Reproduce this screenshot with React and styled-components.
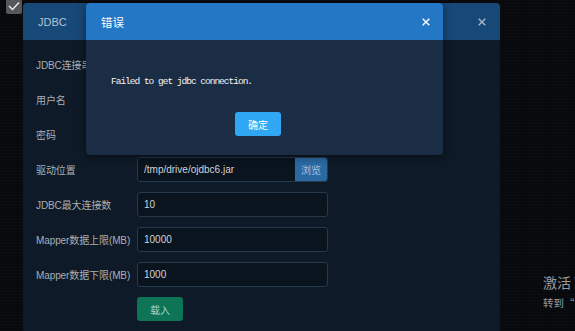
import React from "react";
import styled, { createGlobalStyle } from "styled-components";

const GlobalStyle = createGlobalStyle`
  html, body {
    margin: 0;
    padding: 0;
    width: 575px;
    height: 331px;
    overflow: hidden;
    background: #06080c;
    font-family: "Liberation Sans", "Noto Sans CJK SC", sans-serif;
  }
`;

const Desktop = styled.div`
  position: relative;
  width: 575px;
  height: 331px;
  overflow: hidden;
  background-color: #06080c;
  background-image:
    linear-gradient(rgba(255, 255, 255, 0.012) 1px, transparent 1px),
    linear-gradient(90deg, rgba(255, 255, 255, 0.012) 1px, transparent 1px);
  background-size: 3px 3px;
`;

const CheckBox = styled.div`
  position: absolute;
  left: 6px;
  top: -2px;
  width: 16px;
  height: 16px;
  background: #55575b;
  border-radius: 2px;
  display: flex;
  align-items: center;
  justify-content: center;
`;

const Dialog = styled.div`
  position: absolute;
  left: ${(p) => p.$left}px;
  top: 3px;
  width: ${(p) => p.$width}px;
  height: ${(p) => p.$height}px;
  background: ${(p) => p.$body};
  border-radius: 4px;
  overflow: hidden;
  display: flex;
  flex-direction: column;
  box-shadow: ${(p) => (p.$shadow ? "0 2px 8px rgba(0,0,0,0.45)" : "none")};
`;

const DialogHeader = styled.div`
  height: 37px;
  flex: none;
  background: ${(p) => p.$bg};
  display: flex;
  align-items: center;
  justify-content: space-between;
  padding: 0 ${(p) => p.$padRight}px 0 ${(p) => p.$padLeft}px;
  color: ${(p) => p.$color};
  font-size: ${(p) => p.$size}px;
`;

const Close = styled.svg`
  width: 8px;
  height: 8px;
  display: block;
`;

const FormBody = styled.div`
  padding: 12px 0 0 13px;
  display: flex;
  flex-direction: column;
  gap: 10px;
`;

const Row = styled.div`
  display: flex;
  align-items: center;
  height: 25px;
`;

const Label = styled.div`
  width: 101px;
  flex: none;
  font-size: 10px;
  color: #a9afb6;
  white-space: nowrap;
  letter-spacing: -0.1px;
`;

const InputWrap = styled.div`
  width: 191px;
  height: 25px;
  box-sizing: border-box;
  border: 1px solid #26384c;
  border-radius: 3px;
  background: #0a141e;
  display: flex;
  align-items: center;
  overflow: hidden;
`;

const InputText = styled.div`
  flex: 1;
  padding-left: 6px;
  font-size: 10px;
  color: #cfd3d7;
`;

const Browse = styled.div`
  width: 32px;
  height: 100%;
  background: #2a6aa4;
  color: #a8bfe0;
  font-size: 10px;
  display: flex;
  align-items: center;
  justify-content: center;
`;

const Button = styled.div`
  width: 46px;
  height: 24px;
  border-radius: 3px;
  background: ${(p) => p.$bg};
  color: ${(p) => p.$color};
  font-size: 10px;
  display: flex;
  align-items: center;
  justify-content: center;
`;

const ButtonRow = styled.div`
  padding-left: 101px;
`;

const ErrorBody = styled.div`
  flex: 1;
  display: flex;
  flex-direction: column;
  padding: 37px 0 0 25px;
`;

const Message = styled.div`
  font-family: "Liberation Mono", "DejaVu Sans Mono", monospace;
  font-size: 9.5px;
  letter-spacing: -1px;
  color: #f2f4f6;
  line-height: 10px;
`;

const ErrorFooter = styled.div`
  padding: 25px 0 0 124px;
`;

const Watermark = styled.div`
  position: absolute;
  left: 543px;
  top: 273px;
  color: #9b9b9b;
  white-space: nowrap;
  font-family: "Noto Sans CJK SC", sans-serif;
`;

const WmTitle = styled.div`
  font-size: 14px;
  line-height: 18px;
`;

const WmSub = styled.div`
  font-size: 10.5px;
  line-height: 14px;
  margin-top: 5px;
`;

const CloseIcon = ({ color }) => (
  <Close viewBox="0 0 8 8">
    <path d="M0.7 0.7 L7.3 7.3 M7.3 0.7 L0.7 7.3" stroke={color} strokeWidth="1.4" />
  </Close>
);

const rows = [
  { label: "JDBC连接串", value: "" },
  { label: "用户名", value: "" },
  { label: "密码", value: "" },
  { label: "驱动位置", value: "/tmp/drive/ojdbc6.jar", browse: true },
  { label: "JDBC最大连接数", value: "10" },
  { label: "Mapper数据上限(MB)", value: "10000" },
  { label: "Mapper数据下限(MB)", value: "1000" },
];

export default function App() {
  return (
    <Desktop>
      <GlobalStyle />
      <CheckBox>
        <svg width="12" height="10" viewBox="0 0 12 10">
          <path d="M1 5 L4.5 8.5 L11 1.5" stroke="#e8e8e8" strokeWidth="1.5" fill="none" />
        </svg>
      </CheckBox>

      <Dialog $left={23} $width={477} $height={340} $body="#0e1a27">
        <DialogHeader $bg="#164878" $padLeft={15} $padRight={14} $color="#b6c4d4" $size={11}>
          <span>JDBC</span>
          <CloseIcon color="#a9b6c4" />
        </DialogHeader>
        <FormBody>
          {rows.map((r) => (
            <Row key={r.label}>
              <Label>{r.label}</Label>
              <InputWrap>
                <InputText>{r.value}</InputText>
                {r.browse && <Browse>浏览</Browse>}
              </InputWrap>
            </Row>
          ))}
          <ButtonRow>
            <Button $bg="#0d7456" $color="#b7cfc6">载入</Button>
          </ButtonRow>
        </FormBody>
      </Dialog>

      <Dialog $left={86} $width={357} $height={152} $body="#1b2d45" $shadow>
        <DialogHeader $bg="#2477c5" $padLeft={15} $padRight={13} $color="#ffffff" $size={11.5}>
          <span>错误</span>
          <CloseIcon color="#ffffff" />
        </DialogHeader>
        <ErrorBody>
          <Message>Failed to get jdbc connection.</Message>
          <ErrorFooter>
            <Button $bg="#2fa7f4" $color="#ffffff">确定</Button>
          </ErrorFooter>
        </ErrorBody>
      </Dialog>

      <Watermark>
        <WmTitle>激活 Windows</WmTitle>
        <WmSub>转到“设置”以激活 Windows。</WmSub>
      </Watermark>
    </Desktop>
  );
}
